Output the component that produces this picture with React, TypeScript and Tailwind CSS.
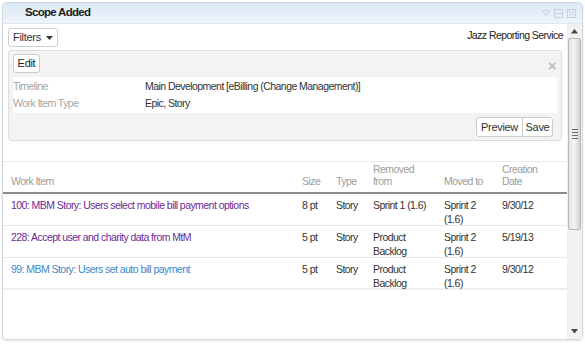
import React from "react";

const rows = [
  {
    item: "100: MBM Story: Users select mobile bill payment options",
    visited: true,
    size: "8 pt",
    type: "Story",
    from: ["Sprint 1 (1.6)"],
    to: ["Sprint 2", "(1.6)"],
    date: "9/30/12",
  },
  {
    item: "228: Accept user and charity data from MtM",
    visited: true,
    size: "5 pt",
    type: "Story",
    from: ["Product", "Backlog"],
    to: ["Sprint 2", "(1.6)"],
    date: "5/19/13",
  },
  {
    item: "99: MBM Story: Users set auto bill payment",
    visited: false,
    size: "5 pt",
    type: "Story",
    from: ["Product", "Backlog"],
    to: ["Sprint 2", "(1.6)"],
    date: "9/30/12",
  },
];

const cols = "grid grid-cols-[292px_35px_36px_71px_58px_1fr]";

export default function App() {
  return (
    <div
      className="w-[585px] h-[344px] overflow-hidden bg-white p-[2px] pb-[4px] text-[10.5px] tracking-[-0.55px] text-[#333]"
      style={{ fontFamily: '"Liberation Sans", Arial, sans-serif' }}
    >
      <div className="flex h-full flex-col overflow-hidden rounded-[4px] border border-[#d3d9e0] shadow-[0_1px_2px_rgba(0,0,0,0.12)]">
        {/* Title bar */}
        <div className="flex h-[21px] shrink-0 items-center border-b border-[#e2e6ea] bg-gradient-to-b from-[#dbe8f5] to-[#eef4fa] pl-[22px] pr-[5px]">
          <span className="text-[11.5px] font-bold tracking-[-0.7px] text-[#1e1e1e]">Scope Added</span>
          <div className="ml-auto flex items-center gap-[2px] text-[#c9d2dc]">
            <svg width="10" height="10" viewBox="0 0 10 10">
              <path d="M1.5 2.5h7L5 7.5z" fill="none" stroke="currentColor" strokeWidth="1" />
            </svg>
            <svg width="11" height="11" viewBox="0 0 11 11">
              <rect x="1.5" y="1.5" width="8" height="8" fill="none" stroke="currentColor" />
              <path d="M1.5 5.5h8" stroke="currentColor" />
            </svg>
            <svg width="11" height="11" viewBox="0 0 11 11">
              <rect x="1.5" y="1.5" width="8" height="8" fill="none" stroke="currentColor" />
              <path d="M3 3l5 5M8 3l-5 5" stroke="currentColor" />
            </svg>
          </div>
        </div>

        {/* Body */}
        <div className="flex min-h-0 flex-1">
          <div className="flex min-w-0 flex-1 flex-col">
            <div className="flex items-start justify-between pl-[5px] pr-[4px] pt-[4px]">
              <button className="flex h-[19px] w-[50px] items-center gap-[5px] rounded-[3px] border border-[#cfcfcf] bg-white pl-[4px] text-[11px] tracking-[-0.3px] text-[#333]">
                Filters
                <svg width="7" height="4" viewBox="0 0 7 4">
                  <path d="M0 0h7L3.5 4z" fill="#333" />
                </svg>
              </button>
              <span className="text-[#222]">Jazz Reporting Service</span>
            </div>

            {/* Filter panel */}
            <div className="mx-[5px] mt-[3px] h-[91px] rounded-[3px] border border-[#dedede] bg-[#f3f3f3] px-[4px] pt-[3px]">
              <div className="flex items-start justify-between">
                <button className="flex h-[19px] w-[27px] items-center justify-center rounded-[3px] border border-[#cccccc] bg-white text-[11px] tracking-[-0.3px] text-[#222]">
                  Edit
                </button>
                <span className="mr-[1px] mt-[4px] text-[15px] font-bold leading-none text-[#bcbcbc]">×</span>
              </div>
              <div className="mt-[4px] bg-white py-[1px]">
                <div className="flex h-[17px] items-center">
                  <span className="w-[132px] text-[#a5a5a5]">Timeline</span>
                  <span className="text-[#333]">Main Development [eBilling (Change Management)]</span>
                </div>
                <div className="flex h-[17px] items-center">
                  <span className="w-[132px] text-[#a5a5a5]">Work Item Type</span>
                  <span className="text-[#333]">Epic, Story</span>
                </div>
              </div>
              <div className="mt-[4px] flex justify-end pr-[4px]">
                <div className="flex h-[20px] overflow-hidden rounded-[3px] border border-[#cccccc] bg-white text-[11px] tracking-[-0.3px] text-[#333]">
                  <span className="flex w-[46px] items-center justify-center border-r border-[#cccccc]">Preview</span>
                  <span className="flex w-[29px] items-center justify-center">Save</span>
                </div>
              </div>
            </div>

            {/* Table */}
            <div className="mt-[20px] border-t border-[#ececec]">
              <div className={`${cols} h-[32px] items-end border-b-2 border-[#8c8c8c] pb-[5px] leading-[12px] text-[#9c9c9c]`}>
                <span className="pl-[8px]">Work Item</span>
                <span className="pl-[7px]">Size</span>
                <span className="pl-[6px]">Type</span>
                <span className="pl-[7px]">Removed<br />from</span>
                <span className="pl-[7px]">Moved to</span>
                <span className="pl-[7px]">Creation<br />Date</span>
              </div>
              {rows.map((r, i) => (
                <div
                  key={i}
                  className={`${cols} h-[32px] pt-[4px] leading-[14px] ${i === rows.length - 1 ? "border-b-2 border-[#eeeeee]" : "border-b border-[#e8e8e8]"}`}
                >
                  <span className={`pl-[8px] ${r.visited ? "text-[#6a2a93]" : "text-[#3d87c9]"}`}>{r.item}</span>
                  <span className="pl-[7px]">{r.size}</span>
                  <span className="pl-[6px]">{r.type}</span>
                  <span className="pl-[7px]">
                    {r.from.map((t, j) => (
                      <div key={j}>{t}</div>
                    ))}
                  </span>
                  <span className="pl-[7px]">
                    {r.to.map((t, j) => (
                      <div key={j}>{t}</div>
                    ))}
                  </span>
                  <span className="pl-[7px]">{r.date}</span>
                </div>
              ))}
            </div>
          </div>

          {/* Scrollbar */}
          <div className="flex w-[15px] shrink-0 flex-col items-center bg-[#f1f1f1] pb-[4px] pt-[4px]">
            <svg width="7" height="5" viewBox="0 0 7 5" className="mt-[1px]">
              <path d="M0 4.5h7L3.5 0z" fill="#444" />
            </svg>
            <div className="mt-[4px] flex h-[192px] w-[13px] flex-col items-center justify-center rounded-[2px] border border-[#b9b9b9] bg-gradient-to-r from-[#e4e4e4] via-[#f4f4f4] to-[#d0d0d0]">
              <div className="flex flex-col gap-[2px]">
                <div className="h-px w-[6px] bg-[#666]" />
                <div className="h-px w-[6px] bg-[#666]" />
                <div className="h-px w-[6px] bg-[#666]" />
                <div className="h-px w-[6px] bg-[#666]" />
              </div>
            </div>
            <svg width="7" height="5" viewBox="0 0 7 5" className="mt-auto mb-[1px]">
              <path d="M0 0h7L3.5 4.5z" fill="#444" />
            </svg>
          </div>
        </div>
      </div>
    </div>
  );
}
